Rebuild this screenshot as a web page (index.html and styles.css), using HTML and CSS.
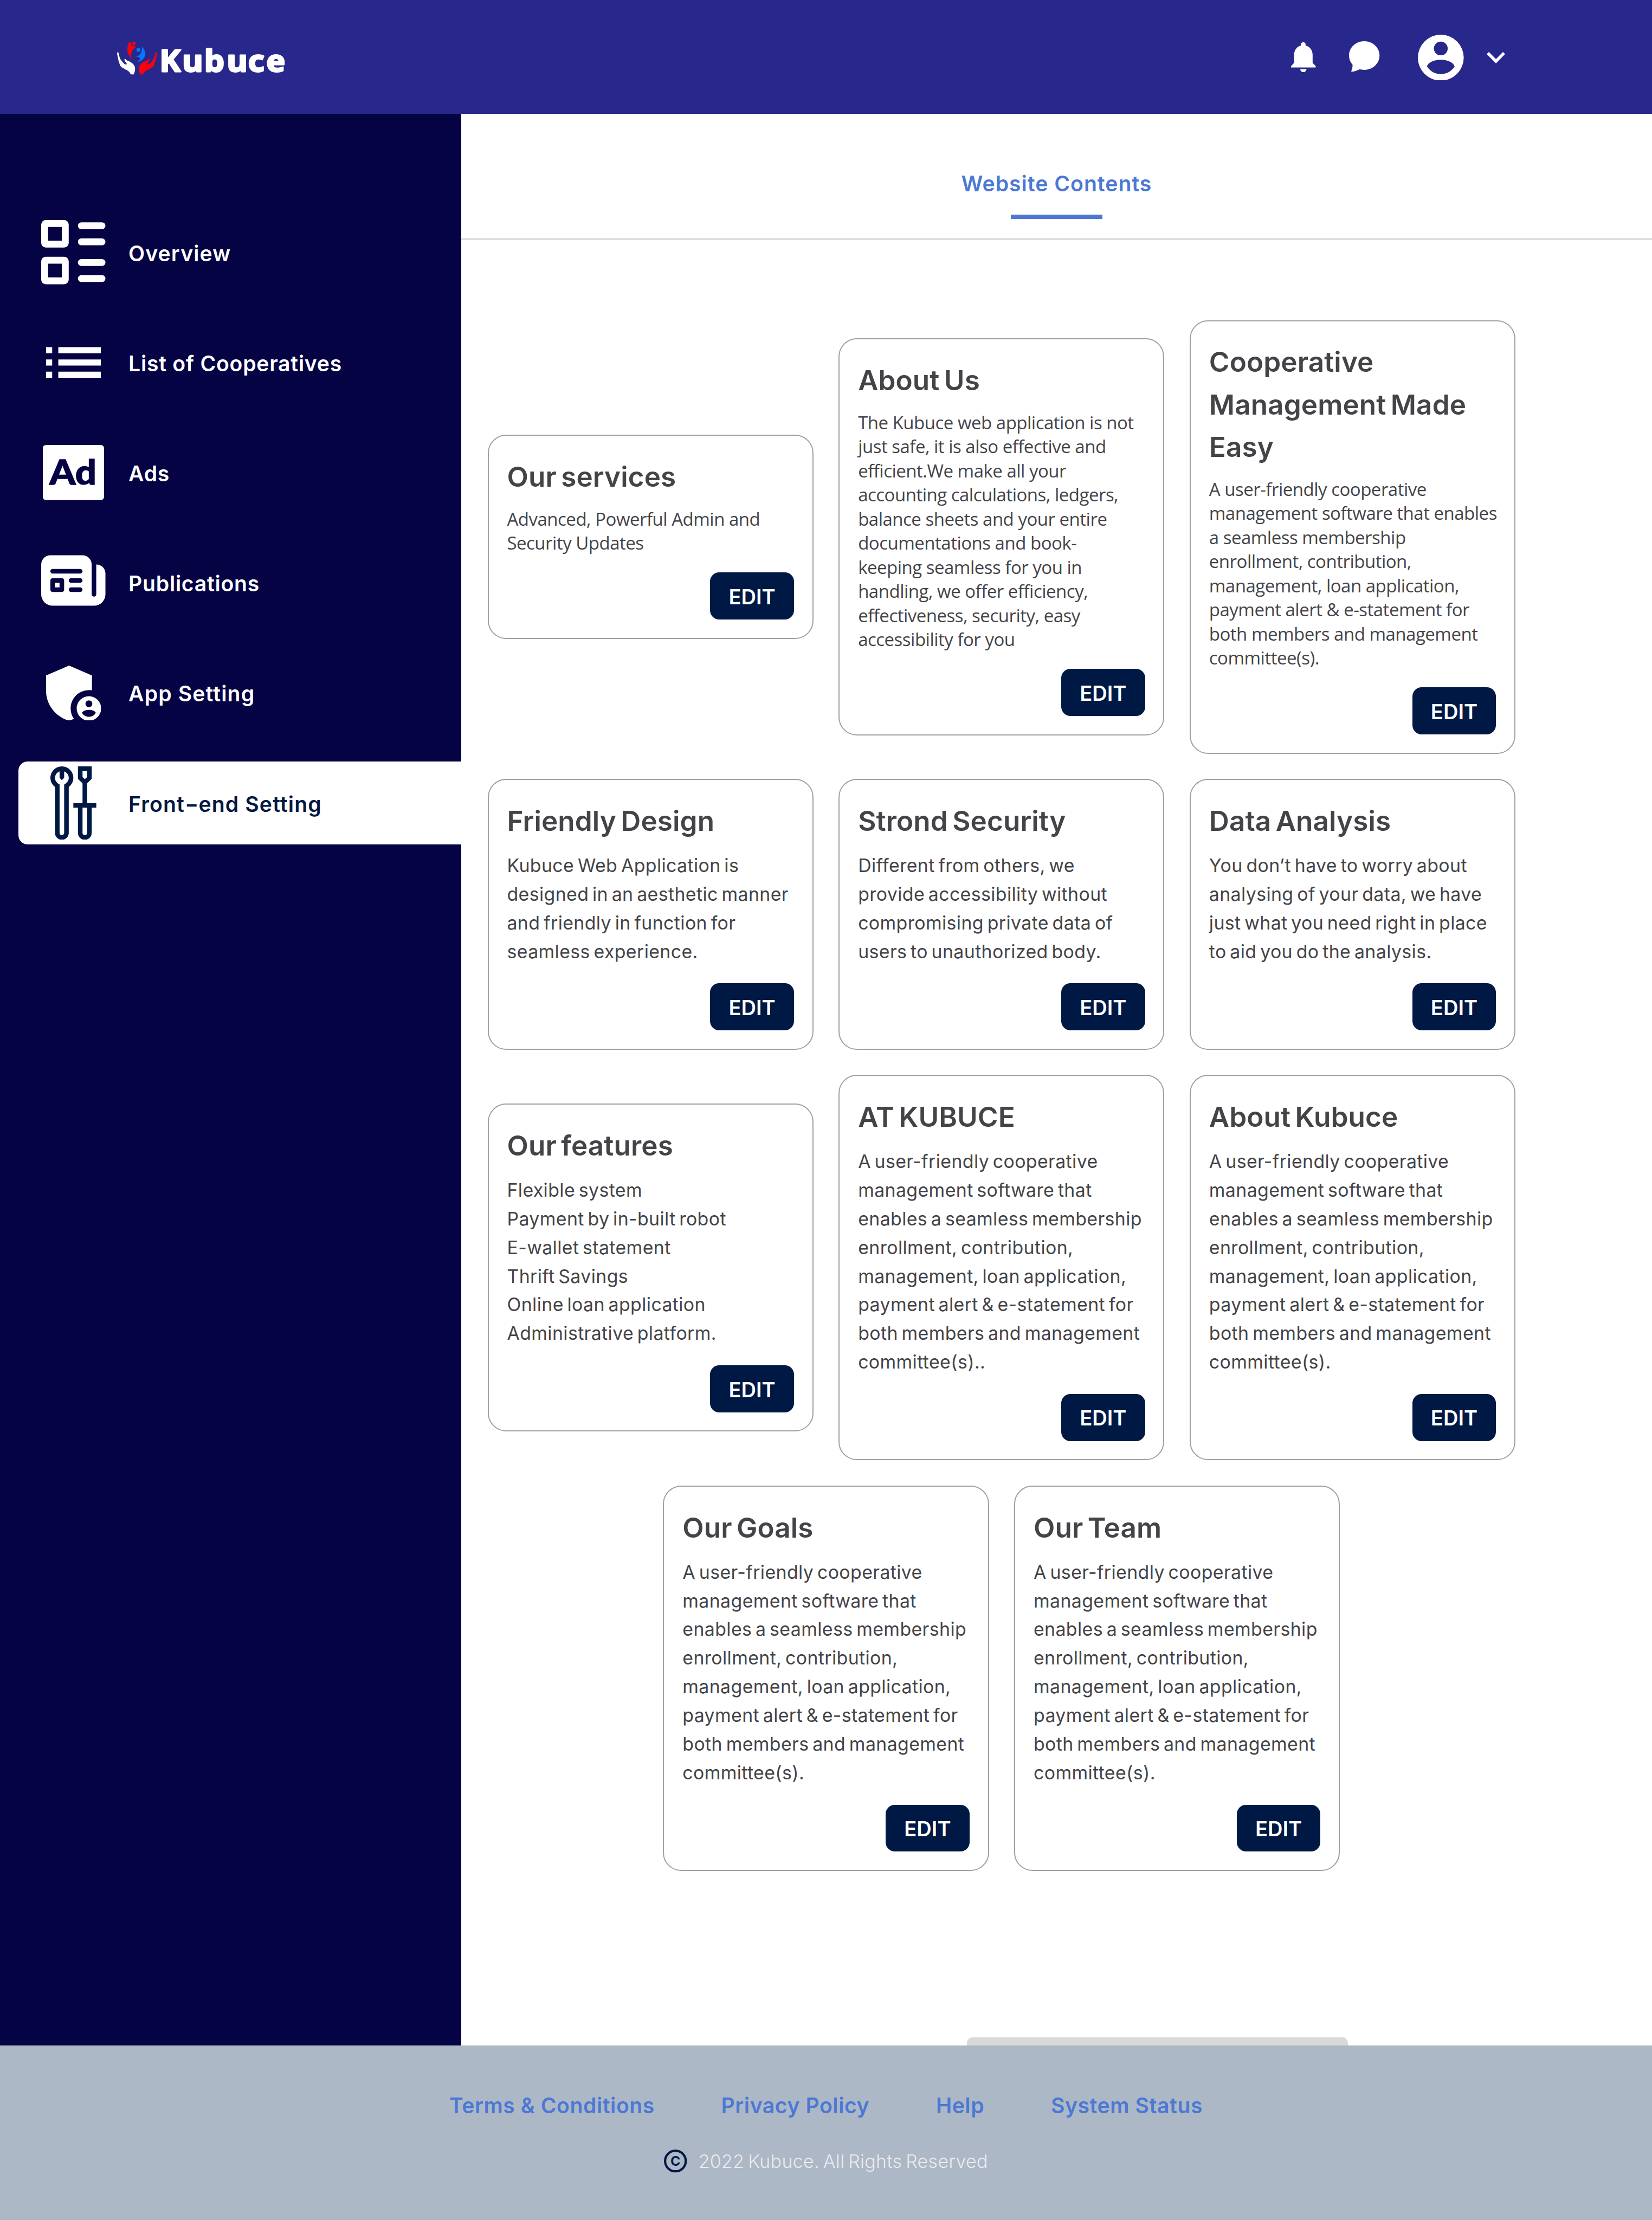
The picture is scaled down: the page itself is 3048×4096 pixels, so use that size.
FILE: index.html
```html
<!DOCTYPE html>
<html lang="en">
<head>
<meta charset="utf-8">
<title>Kubuce Admin</title>
<link rel="stylesheet" href="styles.css">
</head>
<body>
<header class="topbar">
  <svg class="logo" viewBox="160 153 1257 252" preserveAspectRatio="none" role="img" aria-label="Kubuce">
    <path fill="#fff" d="M165 230C170 228 172 240 177 262C183 290 196 300 209 317C215 325 226 330 231 326C236 320 222 308 219 301C212 290 216 284 219 283C224 284 226 292 240 299C262 307 292 325 294 355C296 378 288 392 285 405H261C256 380 235 373 215 362C200 352 183 345 180 325C170 300 160 250 161 240C162 234 163 231 165 230z"/>
    <path fill="#fe000c" transform="translate(617 0) scale(-1 1)" d="M165 230C170 228 172 240 177 262C183 290 196 300 209 317C215 325 226 330 231 326C236 320 222 308 219 301C212 290 216 284 219 283C224 284 226 292 240 299C262 307 292 325 294 355C296 378 288 392 285 405H261C256 380 235 373 215 362C200 352 183 345 180 325C170 300 160 250 161 240C162 234 163 231 165 230z"/>
    <path fill="#fe000c" d="M250 153H259C260 175 275 186 304 187C275 205 255 235 269 289C255 262 237 245 237 210C237 185 243 165 250 153zM269 153H298C300 168 293 177 283 177S268 168 269 153z"/>
    <path fill="#0678fb" d="M344 186C362 205 372 225 371 245C368 275 345 300 315 308C325 295 335 285 328 276C322 268 312 268 300 265C330 258 350 235 344 186z"/>
    <ellipse fill="#0678fb" cx="319" cy="212" rx="14" ry="15"/>
    <text class="logo-word" y="384" x="476 646 810 978 1136 1272">Kubuce</text>
  </svg>
  <div class="actions">
    <svg class="bell" viewBox="170 186 144 234" preserveAspectRatio="none"><path d="M228 212V203Q228 186 241.500 186T255 203V212C280 220 296 250 296 284V348L314 373V384H170V373L188 348V284C188 250 204 220 228 212zM224 396H260C260 410 252 420 242 420S224 410 224 396z"/></svg>
    <svg class="chat" viewBox="511 174 179 239" preserveAspectRatio="none"><path d="M600 174C650 174 690 224 690 286S650 399 600 399C591 399 582 397 574 394C562 402 545 412 528 413C523 413 524 408 525 405C530 390 532 375 532 359C518 338 511 313 511 286C511 224 551 174 600 174z"/></svg>
    <svg class="avatar" viewBox="0 0 40 40"><path fill-rule="evenodd" d="M20 0a20 20 0 1 1 0 40a20 20 0 1 1 0-40zM20 6a6 6 0 1 0 0 12a6 6 0 1 0 0-12zM8 27.800C10.800 32.200 15.200 34.400 20 34.400S29.200 32.200 32 27.800C31.400 23.800 25 21.800 20 21.800S8.600 23.800 8 27.800z"/></svg>
    <svg class="chevron" viewBox="1317 259 107 89" preserveAspectRatio="none"><path d="M1330 259L1371 314L1412 259L1424 275L1371 348L1317 275z"/></svg>
  </div>
</header>

<div class="body">
  <nav class="sidebar">
    <a class="item"><span class="slot"><svg class="i56" viewBox="0 0 56 56"><path fill-rule="evenodd" d="M4 0H20a4 4 0 0 1 4 4V20a4 4 0 0 1-4 4H4a4 4 0 0 1-4-4V4a4 4 0 0 1 4-4zM6 6V18H18V6zM4 32H20a4 4 0 0 1 4 4V52a4 4 0 0 1-4 4H4a4 4 0 0 1-4-4V36a4 4 0 0 1 4-4zM6 38V50H18V38z"/><rect x="32" y="2" width="24" height="6" rx="3"/><rect x="32" y="16" width="24" height="6" rx="3"/><rect x="32" y="34" width="24" height="6" rx="3"/><rect x="32" y="48" width="24" height="6" rx="3"/></svg></span><span class="label">Overview</span></a>
    <a class="item"><span class="slot"><svg class="i48" viewBox="0 0 48 48"><path d="M0 10.670h5.330V16H0zM10.670 10.670H48V16H10.670zM0 21.330h5.330v5.330H0zM10.670 21.330H48v5.330H10.670zM0 32h5.330v5.330H0zM10.670 32H48v5.330H10.670z"/></svg></span><span class="label tight">List of Cooperatives</span></a>
    <a class="item"><span class="slot"><svg class="iad" viewBox="0 0 53.33 48"><rect width="53.330" height="48" rx="2.670"/><text class="ad-word" x="5.800" y="34.600" textLength="41" lengthAdjust="spacingAndGlyphs">Ad</text></svg></span><span class="label tight">Ads</span></a>
    <a class="item"><span class="slot"><svg class="i56" viewBox="0 -4 56 56"><path fill-rule="evenodd" d="M8 0H36a8 8 0 0 1 8 8V34a2 2 0 0 0 4 0V8a8 8 0 0 1 8 8V34a10 10 0 0 1-10 10H10a10 10 0 0 1-10-10V8a8 8 0 0 1 8-8zM10 12a2 2 0 0 0 0 4H34a2 2 0 0 0 0-4zM10 20a2 2 0 0 0-2 2V30a2 2 0 0 0 2 2H18a2 2 0 0 0 2-2V22a2 2 0 0 0-2-2zM12 24h4v4h-4zM26 20a2 2 0 0 0 0 4H34a2 2 0 0 0 0-4zM26 28a2 2 0 0 0 0 4H34a2 2 0 0 0 0-4z"/></svg></span><span class="label tight">Publications</span></a>
    <a class="item"><span class="slot"><svg class="i48" viewBox="60 30 432 432"><path fill-rule="evenodd" d="M240 30L60 108V230C60 340 140 435 240 462L279 449A144 144 0 0 1 420 224V108zM396 270a96 96 0 1 1 0 192a96 96 0 1 1 0-192zM396 303a27 27 0 1 0 0 54a27 27 0 1 0 0-54zM342 401C354 422 374 432 396 432S438 422 450 401C444 385 418 378 396 378S348 385 342 401z"/></svg></span><span class="label">App Setting</span></a>
    <a class="item active"><span class="slot"><svg class="itool" viewBox="96 822 360 576"><path fill-rule="evenodd" d="M132 984A90 90 0 1 1 240 984V1344A54 54 0 0 1 132 1344zM168 964V1344a18 18 0 0 0 36 0V964C225 952 240 935 240 912C240 890 226 870 204 861V911L186 930L168 911V861C146 870 132 890 132 912C132 935 147 952 168 964zM312 822H420V920L384 955V1110H456V1146H420V1344A54 54 0 0 1 312 1344V1146H276V1110H348V955L312 920zM348 858V906L366 922L384 906V858zM348 1146V1344a18 18 0 0 0 36 0V1146z"/></svg></span><span class="label">Front<span class="dash">-</span>end Setting</span></a>
  </nav>

  <main class="content">
    <div class="tabs"><a class="tab">Website Contents</a></div>
    <section class="cards">
      <article class="card compact"><h2>Our services</h2><p>Advanced, Powerful Admin and<br>Security Updates</p><button>EDIT</button></article>
      <article class="card compact"><h2>About Us</h2><p>The Kubuce web application is not<br>just safe, it is also effective and<br>efficient.We make all your<br>accounting calculations, ledgers,<br>balance sheets and your entire<br>documentations and book-<br>keeping seamless for you in<br>handling, we offer efficiency,<br>effectiveness, security, easy<br>accessibility for you</p><button>EDIT</button></article>
      <article class="card compact"><h2>Cooperative<br>Management Made<br>Easy</h2><p>A user-friendly cooperative<br>management software that enables<br>a seamless membership<br>enrollment, contribution,<br>management, loan application,<br>payment alert &amp; e-statement for<br>both members and management<br>committee(s).</p><button>EDIT</button></article>
      <article class="card"><h2>Friendly Design</h2><p>Kubuce Web Application is<br>designed in an aesthetic manner<br>and friendly in function for<br>seamless experience.</p><button>EDIT</button></article>
      <article class="card"><h2>Strond Security</h2><p>Different from others, we<br>provide accessibility without<br>compromising private data of<br>users to unauthorized body.</p><button>EDIT</button></article>
      <article class="card"><h2>Data Analysis</h2><p>You don’t have to worry about<br>analysing of your data, we have<br>just what you need right in place<br>to aid you do the analysis.</p><button>EDIT</button></article>
      <article class="card"><h2>Our features</h2><p>Flexible system<br>Payment by in-built robot<br>E-wallet statement<br>Thrift Savings<br>Online loan application<br>Administrative platform.</p><button>EDIT</button></article>
      <article class="card"><h2>AT KUBUCE</h2><p>A user-friendly cooperative<br>management software that<br>enables a seamless membership<br>enrollment, contribution,<br>management, loan application,<br>payment alert &amp; e-statement for<br>both members and management<br>committee(s)..</p><button>EDIT</button></article>
      <article class="card"><h2>About Kubuce</h2><p>A user-friendly cooperative<br>management software that<br>enables a seamless membership<br>enrollment, contribution,<br>management, loan application,<br>payment alert &amp; e-statement for<br>both members and management<br>committee(s).</p><button>EDIT</button></article>
      <article class="card"><h2>Our Goals</h2><p>A user-friendly cooperative<br>management software that<br>enables a seamless membership<br>enrollment, contribution,<br>management, loan application,<br>payment alert &amp; e-statement for<br>both members and management<br>committee(s).</p><button>EDIT</button></article>
      <article class="card"><h2>Our Team</h2><p>A user-friendly cooperative<br>management software that<br>enables a seamless membership<br>enrollment, contribution,<br>management, loan application,<br>payment alert &amp; e-statement for<br>both members and management<br>committee(s).</p><button>EDIT</button></article>
    </section>
    <div class="drawer"></div>
  </main>
</div>

<footer class="footer">
  <div class="links"><a>Terms &amp; Conditions</a><a>Privacy Policy</a><a>Help</a><a>System Status</a></div>
  <div class="copy">
    <svg viewBox="0 0 20 20"><circle cx="10" cy="10" r="9" fill="none" stroke="#001944" stroke-width="2"/><text class="c-word" x="10" y="14.200" text-anchor="middle">C</text></svg>
    <span>2022 Kubuce. All Rights Reserved</span>
  </div>
</footer>
</body>
</html>
```
FILE: styles.css
```css
/* 1rem = 10 design pixels of the 1440-wide layout */
html { font-size: 21.16667px; }
* { box-sizing: border-box; }
body {
  margin: 0;
  width: 144rem;
  height: 4096px;
  overflow: hidden;
  display: flex;
  flex-direction: column;
  background: #fff;
  font-family: Inter, "Open Sans", sans-serif;
}
svg { display: block; fill: currentColor; }

.topbar {
  height: 9.9rem;
  flex: none;
  padding: 0.1rem 12.8rem 0 10.2rem;
  display: flex;
  align-items: center;
  justify-content: space-between;
  background: #28288c;
  color: #fff;
}
.logo { width: 14.7rem; height: 2.8rem; margin-top: 0.2rem; overflow: visible; }
.logo-word {
  font: 700 238px "Noto Sans", sans-serif;
  fill: #fff;
  stroke: #fff;
  stroke-width: 12px;
  stroke-linejoin: round;
}
.actions { display: flex; align-items: center; }
.bell { width: 2.15rem; height: 2.6rem; margin-right: 2.92rem; }
.chat { width: 2.66rem; height: 2.66rem; margin-right: 3.33rem; margin-top: -0.14rem; }
.avatar { width: 4rem; height: 4rem; margin-right: 2rem; }
.chevron { width: 1.6rem; height: 0.99rem; margin-top: 0.08rem; }

.body { height: 168.4rem; flex: none; display: flex; }
.sidebar {
  width: 40.2rem;
  flex: none;
  padding: 8.5rem 0 0 1.6rem;
  display: flex;
  flex-direction: column;
  gap: 2.4rem;
  background: #050344;
  color: #fff;
}
.item {
  height: 7.2rem;
  padding-left: 1.6rem;
  display: flex;
  align-items: center;
  gap: 1.6rem;
  font-size: 1.85rem;
  font-weight: 600;
  letter-spacing: 0.053rem;
  white-space: nowrap;
}
.item.active {
  background: #fff;
  color: #001944;
  border-radius: 0.8rem 0 0 0.8rem;
}
.label { padding-top: 0.14rem; }
.tight { letter-spacing: 0.035rem; }
/* the hyphen is set wider than the font's own */
.dash { display: inline-block; width: 1.2rem; transform: scaleX(1.4); transform-origin: 0 50%; }
.slot { width: 6.4rem; display: flex; justify-content: center; }
.i56 { width: 5.6rem; height: 5.6rem; }
.i48 { width: 4.8rem; height: 4.8rem; }
.iad { width: 5.333rem; height: 4.8rem; }
.itool { width: 4rem; height: 6.4rem; }
.ad-word { font: 900 29.5px Lato, sans-serif; fill: #050344; stroke: #050344; stroke-width: 0.6px; letter-spacing: 0; }

.content { flex: 1; display: flex; flex-direction: column; color: #444448; }
.tabs {
  height: 11rem;
  flex: none;
  display: flex;
  justify-content: center;
  align-items: flex-start;
  padding-top: 4.94rem;
  border-bottom: 2px solid #c8c8c9;
}
.tab {
  display: flex;
  flex-direction: column;
  align-items: center;
  gap: 1.46rem;
  font-size: 1.85rem;
  line-height: 2.4rem;
  font-weight: 600;
  letter-spacing: 0.047rem;
  color: #4c78d4;
}
.tab::after { content: ""; width: 8rem; height: 0.4rem; background: #4c78d4; }

.cards {
  width: 94.2rem;
  padding-top: 7rem;
  display: flex;
  flex-wrap: wrap;
  justify-content: center;
  align-items: center;
  gap: 2.2rem;
}
.card {
  width: 28.4rem;
  padding: 1.69rem 1.6rem 1.6rem;
  border: 0.1rem solid #a0a0a0;
  border-radius: 1.6rem;
  display: flex;
  flex-direction: column;
  white-space: nowrap;
}
.card h2 {
  margin: 0 0 0.83rem;
  font-size: 2.42rem;
  line-height: 3.7rem;
  font-weight: 600;
  letter-spacing: 0.005rem;
  word-spacing: -0.22rem;
}
.card p {
  margin: 0 0 1.49rem;
  font-size: 1.6rem;
  line-height: 2.5rem;
  letter-spacing: 0.018rem;
  word-spacing: -0.15rem;
}
.compact p {
  font: 1.56rem/2.1rem "Open Sans", sans-serif;
  letter-spacing: -0.024rem;
  word-spacing: 0;
}
.card button {
  align-self: flex-end;
  width: 7.3rem;
  height: 4.1rem;
  padding: 0.12rem 0 0;
  border: 0;
  border-radius: 0.8rem;
  background: #001944;
  color: #fff;
  font: 600 1.8rem Inter, sans-serif;
}
.drawer {
  width: 33.2rem;
  height: 0.7rem;
  margin: auto 0 0 44.1rem;
  border-radius: 0.5rem 0.5rem 0 0;
  background: #d9d9d9;
}

.footer {
  flex: 1;
  padding-top: 4.05rem;
  display: flex;
  flex-direction: column;
  align-items: center;
  background: #adb8c7;
}
.links {
  display: flex;
  gap: 5.8rem;
  font-size: 1.85rem;
  line-height: 2.4rem;
  font-weight: 600;
  letter-spacing: 0.026rem;
  color: #4c78d4;
}
.copy {
  margin-top: 2.4rem;
  display: flex;
  align-items: center;
  gap: 1rem;
  font-size: 1.6rem;
  line-height: 2.4rem;
  font-weight: 300;
  letter-spacing: 0.018rem;
  word-spacing: -0.15rem;
  color: #ebebeb;
}
.copy span { padding-top: 0.06rem; }
.copy svg { width: 2rem; height: 2rem; }
.c-word { font: 700 11.8px Inter, sans-serif; fill: #001944; letter-spacing: 0; }
```
